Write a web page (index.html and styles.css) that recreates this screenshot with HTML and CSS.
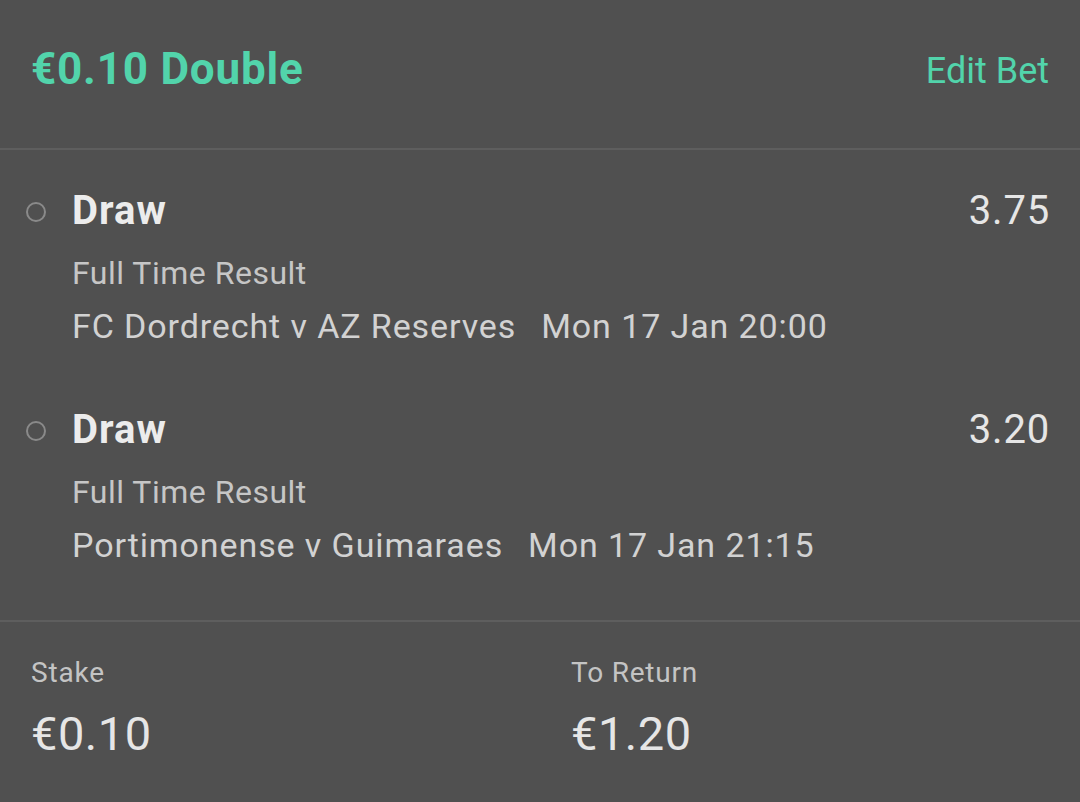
FILE: index.html
```html
<!DOCTYPE html>
<html>
<head>
<meta charset="utf-8">
<link rel="stylesheet" href="styles.css">
</head>
<body>
<div class="slip">
  <div class="header">
    <div class="title">€0.10 Double</div>
    <div class="edit">Edit Bet</div>
  </div>
  <div class="selections">
    <div class="sel">
      <div class="radio"></div>
      <div class="info">
        <div class="row">
          <div class="name">Draw</div>
          <div class="odds">3.75</div>
        </div>
        <div class="market">Full Time Result</div>
        <div class="event"><span>FC Dordrecht v AZ Reserves</span><span>Mon 17 Jan 20:00</span></div>
      </div>
    </div>
    <div class="sel">
      <div class="radio"></div>
      <div class="info">
        <div class="row">
          <div class="name">Draw</div>
          <div class="odds">3.20</div>
        </div>
        <div class="market">Full Time Result</div>
        <div class="event"><span>Portimonense v Guimaraes</span><span>Mon 17 Jan 21:15</span></div>
      </div>
    </div>
  </div>
  <div class="footer">
    <div class="col">
      <div class="label">Stake</div>
      <div class="value">€0.10</div>
    </div>
    <div class="col">
      <div class="label">To Return</div>
      <div class="value">€1.20</div>
    </div>
  </div>
</div>
</body>
</html>
```
FILE: styles.css
```css
html, body {
  margin: 0;
  padding: 0;
  background: #505050;
}
body {
  font-family: Roboto, "Noto Sans", sans-serif;
  width: 1080px;
  height: 802px;
  overflow: hidden;
}
.slip {
  display: flex;
  flex-direction: column;
}
.header {
  display: flex;
  justify-content: space-between;
  align-items: center;
  height: 150px;
  padding: 0 31px 10px 31px;
  box-sizing: border-box;
  border-bottom: 2px solid #5e5e5e;
}
.title {
  color: #52d4ab;
  font-weight: 700;
  font-size: 44px;
  letter-spacing: 0.8px;
}
.edit {
  color: #52d4ab;
  font-size: 36px;
  padding-top: 4px;
}
.selections {
  display: flex;
  flex-direction: column;
  gap: 61px;
  padding-top: 38px;
  height: 472px;
  box-sizing: border-box;
  border-bottom: 2px solid #5e5e5e;
}
.sel {
  display: flex;
  align-items: flex-start;
}
.radio {
  width: 16px;
  height: 16px;
  border: 2.5px solid #8a8a8a;
  border-radius: 50%;
  margin: 14px 0 0 26px;
  flex: none;
}
.info {
  flex: 1;
  margin-left: 26px;
  padding-right: 31px;
}
.row {
  display: flex;
  justify-content: space-between;
  align-items: baseline;
}
.name {
  color: #ececec;
  font-weight: 700;
  font-size: 40px;
  letter-spacing: 1px;
  line-height: 46px;
}
.odds {
  color: #e6e6e6;
  font-size: 40px;
  letter-spacing: 0.8px;
  line-height: 46px;
  margin-right: -1px;
}
.market {
  color: #c6c6c6;
  font-size: 32px;
  letter-spacing: 0.5px;
  line-height: 36px;
  margin-top: 21px;
}
.event {
  color: #d2d2d2;
  font-size: 34px;
  letter-spacing: 0.9px;
  line-height: 40px;
  margin-top: 15px;
  display: flex;
  gap: 25px;
}
.footer {
  display: flex;
  padding: 34px 0 0 31px;
}
.col {
  flex: none;
  width: 540px;
  display: flex;
  flex-direction: column;
}
.label {
  color: #c4c4c4;
  font-size: 28px;
  letter-spacing: 0.8px;
  line-height: 34px;
}
.value {
  color: #e6e6e6;
  font-size: 47px;
  letter-spacing: 0.5px;
  line-height: 54px;
  margin-top: 17px;
}
```
